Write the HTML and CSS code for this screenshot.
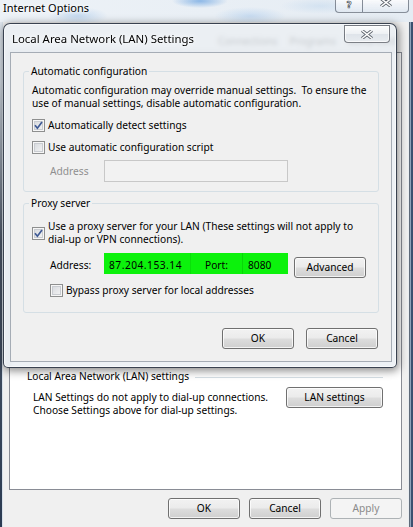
FILE: index.html
```html
<!DOCTYPE html>
<html>
<head>
<meta charset="utf-8">
<title>Internet Options</title>
<link rel="stylesheet" href="styles.css">
</head>
<body>
<div class="win">
  <div class="titlebar">
    <span class="win-title">Internet Options</span>
    <div class="caps">
      <div class="cap cap-help"><span class="qmark">?</span></div>
      <div class="cap cap-close">
        <svg class="capx" width="14" height="9" viewBox="0 0 14 9"><path d="M2 0.5 L12 8.5 M12 0.5 L2 8.5" stroke="#565d66" stroke-width="3.2" fill="none"/><path d="M2 0.5 L12 8.5 M12 0.5 L2 8.5" stroke="#fff" stroke-width="1.5" fill="none"/></svg>
      </div>
    </div>
  </div>
  <div class="frame">
    <div class="lframe"></div>
    <div class="client">
      <div class="tabs">
        <span class="tab">Connections</span><span class="tab">Programs</span><span class="tab">Advanced</span>
      </div>
      <div class="panel">
        <div class="lan-head"><span>Local Area Network (LAN) settings</span><i class="rule"></i></div>
        <div class="lan-row">
          <p class="lan-text">LAN Settings do not apply to dial-up connections.<br>Choose Settings above for dial-up settings.</p>
          <button class="btn btn-lan">LAN settings</button>
        </div>
      </div>
      <div class="footer">
        <button class="btn">OK</button>
        <button class="btn">Cancel</button>
        <button class="btn" disabled>Apply</button>
      </div>
    </div>
    <div class="rframe"></div>
  </div>

  <div class="dlg">
    <div class="dlg-title">
      <span class="dlg-title-text">Local Area Network (LAN) Settings</span>
      <div class="dlg-close">
        <svg width="14" height="9" viewBox="0 0 14 9"><path d="M2 0.5 L12 8.5 M12 0.5 L2 8.5" stroke="#59606a" stroke-width="3.2" fill="none"/><path d="M2 0.5 L12 8.5 M12 0.5 L2 8.5" stroke="#fff" stroke-width="1.5" fill="none"/></svg>
      </div>
    </div>
    <div class="dlg-client">
      <fieldset class="fs fs1">
        <legend>Automatic configuration</legend>
        <p class="desc">Automatic configuration may override manual settings.&nbsp; To ensure the<br>use of manual settings, disable automatic configuration.</p>
        <div class="chk row1">
          <span class="cb"><svg width="11" height="11" viewBox="0 0 11 11"><path d="M2 5.2 L4.4 8.2 L9 2" fill="none" stroke="#3f5a95" stroke-width="1.7"/></svg></span>
          <span>Automatically detect settings</span>
        </div>
        <div class="chk row2">
          <span class="cb"></span>
          <span>Use automatic configuration script</span>
        </div>
        <div class="addr-row">
          <span class="addr-label">Address</span>
          <span class="addr-input"></span>
        </div>
      </fieldset>

      <fieldset class="fs fs2">
        <legend>Proxy server</legend>
        <div class="chk proxy-chk">
          <span class="cb"><svg width="11" height="11" viewBox="0 0 11 11"><path d="M2 5.2 L4.4 8.2 L9 2" fill="none" stroke="#3f5a95" stroke-width="1.7"/></svg></span>
          <span>Use a proxy server for your LAN (These settings will not apply to<br>dial-up or VPN connections).</span>
        </div>
        <div class="proxy-addr">
          <span class="plbl">Address:</span>
          <div class="green">
            <span class="ip">87.204.153.14</span>
            <span class="port-lbl">Port:</span>
            <span class="port">8080</span>
          </div>
          <button class="btn btn-adv">Advanced</button>
        </div>
        <div class="chk bypass">
          <span class="cb"></span>
          <span>Bypass proxy server for local addresses</span>
        </div>
      </fieldset>

      <div class="dlg-btns">
        <button class="btn">OK</button>
        <button class="btn">Cancel</button>
      </div>
    </div>
  </div>
</div>
</body>
</html>
```

FILE: styles.css
```css
* { box-sizing: border-box; }
html, body { margin: 0; padding: 0; }
body {
  width: 413px; height: 527px; overflow: hidden;
  font-family: "Noto Sans", "Liberation Sans", sans-serif;
  font-size: 10.2px; line-height: 13px; color: #000;
  background: #f0f0f0;
}
p { margin: 0; }

.win { position: relative; width: 413px; height: 527px; display: flex; flex-direction: column; }

/* outer window title bar (Aero glass) */
.titlebar {
  height: 22px; flex: none; display: flex; justify-content: space-between; align-items: flex-start;
  background:
    radial-gradient(ellipse 28px 7px at 200px 1px, rgba(110,165,225,0.75), rgba(110,165,225,0) 100%),
    radial-gradient(ellipse 30px 9px at 78px 16px, rgba(150,190,232,0.45), rgba(150,190,232,0) 100%),
    radial-gradient(ellipse 36px 9px at 250px 16px, rgba(160,196,235,0.45), rgba(160,196,235,0) 100%),
    radial-gradient(ellipse 40px 8px at 320px 6px, rgba(175,205,235,0.35), rgba(175,205,235,0) 100%),
    linear-gradient(90deg, #edf2f7, #e5ecf3);
}
.win-title { font-size: 11px; line-height: 14px; padding: 1px 0 0 3px; text-shadow: 0 0 5px #fff, 0 0 3px #fff; }
.caps { display: flex; margin-right: 4px; }
.cap {
  height: 13px; border: 1px solid rgba(45,55,72,0.55); border-top: none;
  background: linear-gradient(rgba(255,255,255,0.75), rgba(222,230,240,0.7));
  display: flex; justify-content: center; overflow: hidden;
}
.cap-help { width: 28px; border-radius: 0 0 0 4px; }
.cap-close { width: 46px; border-left: none; border-radius: 0 0 4px 0; }
.qmark {
  font-family: "DejaVu Sans", sans-serif; font-weight: bold; font-size: 9px; line-height: 11px;
  color: #fff; -webkit-text-stroke: 0.7px #555c66; margin-top: 0;
}
.capx { margin-top: -2px; }

.frame { flex: 1; display: flex; min-height: 0; }
.lframe { width: 3px; flex: none; background: linear-gradient(#dfe6ee 0, #cfd7e0 60px, #4a5566 220px, #2b3b52 100%); border-right: 1px solid #d8e1ea; }
.rframe {
  width: 5px; flex: none;
  background: linear-gradient(90deg, #e9edf1 0 1px, #5f6b7a 1px 2px, #8fa3ba 2px 3px, #3b5170 3px 100%);
}
.client { flex: 1; display: flex; flex-direction: column; min-width: 0; }

.tabs { height: 30px; flex: none; display: flex; align-items: flex-end; padding-left: 209px; }
.tab { padding: 0 6px 4px; color: #222; }

.panel { flex: 1; margin: 0 6px; background: #fff; border: 1px solid #898c95; padding: 317px 18px 0 17px; }
.lan-head { display: flex; align-items: center; }
.lan-head .rule { flex: 1; height: 1px; background: #d5dfe5; margin: 2px 0 0 6px; }
.lan-row { display: flex; justify-content: space-between; align-items: flex-start; margin-top: 4px; padding-left: 6px; }
.lan-text { margin-top: 4px; }

.footer { flex: none; display: flex; justify-content: flex-end; gap: 9px; padding: 8px 6px 8px 0; }

/* buttons */
.btn {
  width: 72px; height: 21px; padding: 0; margin: 0;
  font: inherit; color: #000;
  border: 1px solid #707070; border-radius: 3px;
  background: linear-gradient(#f2f2f2 0%, #ebebeb 48%, #dddddd 52%, #cfcfcf 100%);
  box-shadow: inset 0 0 0 1px rgba(255,255,255,0.75);
}
.btn:disabled { color: #8a8a8a; border-color: #adb2b5; background: #f4f4f4; box-shadow: none; }
.btn-lan { width: 97px; }
.btn-adv { margin: 4px 0 0 6px; flex: none; }

/* LAN dialog */
.dlg {
  position: absolute; left: 3px; top: 23px; width: 394px; height: 345px;
  border: 1px solid rgba(25,35,50,0.85); border-radius: 7px 7px 5px 5px;
  background: rgba(233,238,243,0.82);
  -webkit-backdrop-filter: blur(2px); backdrop-filter: blur(2px);
  box-shadow: 1px 2px 9px 1px rgba(0,0,0,0.45), inset 0 0 0 1px rgba(255,255,255,0.55);
  display: flex; flex-direction: column;
}
.dlg-title { height: 28px; flex: none; display: flex; align-items: flex-start; }
.dlg-title-text { font-size: 11.4px; line-height: 14px; padding: 8px 0 0 8px; text-shadow: 0 0 6px #fff, 0 0 3px #fff; }
.dlg-close {
  margin: 1px 6px 0 auto; width: 46px; height: 18px;
  border: 1px solid rgba(40,45,55,0.6); border-radius: 0 0 4px 4px;
  background: linear-gradient(#fbfcfd 0%, #eef1f4 48%, #dfe4ea 52%, #e8ecf0 100%);
  box-shadow: inset 0 0 0 1px rgba(255,255,255,0.7);
  display: flex; align-items: center; justify-content: center;
}
.dlg-client {
  flex: 1; margin: 0 4px 5px 6px; border: 1px solid #a5acb5; background: #f0f0f0;
  padding: 0 12px; display: flex; flex-direction: column;
}

.fs { margin: 0; border: 1px solid #d5dfe5; border-radius: 3px; padding: 6px 8px 9px 8px; min-width: 0; }
.fs legend { padding: 0 2px; margin-left: -3px; line-height: 13px; }
.fs1 { margin-top: 12px; }
.fs2 { margin-top: 5px; padding-top: 10px; padding-bottom: 15px; }

.chk { display: flex; align-items: center; gap: 3px; }
.row1, .row2 { margin-top: 9px; }
.cb {
  width: 13px; height: 13px; flex: none; border: 1px solid #8e8f8f;
  background: linear-gradient(135deg, #d3d6db, #f7f7f7);
  box-shadow: inset 0 0 0 1px #f6f6f6, inset 0 0 0 2px #c9ccd1;
  display: flex; align-items: center; justify-content: center;
}
.addr-row { display: flex; align-items: center; margin-top: 6px; padding-left: 18px; }
.addr-label { width: 54px; color: #8f8f8f; }
.addr-input { width: 184px; height: 22px; border: 1px solid #c8c8c8; background: #f2f2f2; }

.proxy-chk { align-items: center; }
.proxy-addr { display: flex; align-items: flex-start; margin-top: 7px; padding-left: 18px; }
.plbl { width: 54px; padding-top: 6px; }
.green { width: 184px; height: 21px; background: #0cf20c; display: flex; }
.ip { width: 87px; padding: 6px 0 0 5px; letter-spacing: 0.5px; border-right: 1px solid rgba(0,90,0,0.12); }
.port-lbl { width: 51px; padding: 6px 0 0 14px; }
.port { flex: 1; padding: 6px 0 0 5px; border-left: 1px solid rgba(0,90,0,0.18); }
.bypass { margin-top: 6px; padding-left: 18px; }

.dlg-btns { display: flex; justify-content: flex-end; gap: 12px; margin-top: 15px; padding-right: 1px; }
```
